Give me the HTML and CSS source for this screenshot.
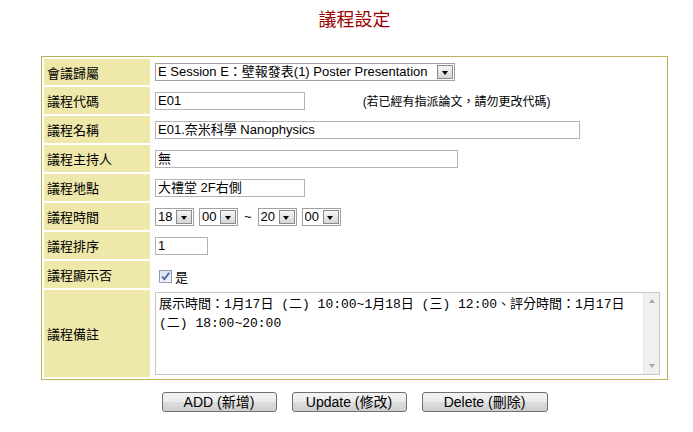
FILE: index.html
```html
<!DOCTYPE html>
<html lang="zh-Hant">

<head>
  <meta charset="UTF-8">
  <title>議程設定</title>
  <link rel="stylesheet" href="styles.css">
</head>

<body>
  <div class="page">
    <h1>議程設定</h1>

    <table class="form-table">
      <tr class="row-first">
        <th>會議歸屬</th>
        <td>
          <span class="select select-session">
            <span class="select-value">E Session E：壁報發表(1) Poster Presentation</span>
            <span class="select-arrow"></span>
          </span>
        </td>
      </tr>
      <tr>
        <th>議程代碼</th>
        <td>
          <span class="input input-code">E01</span>
          <span class="hint">(若已經有指派論文，請勿更改代碼)</span>
        </td>
      </tr>
      <tr>
        <th>議程名稱</th>
        <td><span class="input input-name">E01.奈米科學 Nanophysics</span></td>
      </tr>
      <tr>
        <th>議程主持人</th>
        <td><span class="input input-host">無</span></td>
      </tr>
      <tr>
        <th>議程地點</th>
        <td><span class="input input-place">大禮堂 2F右側</span></td>
      </tr>
      <tr>
        <th>議程時間</th>
        <td>
          <div class="time">
            <span class="select select-time"><span class="select-value">18</span><span class="select-arrow"></span></span>
            <span class="select select-time"><span class="select-value">00</span><span class="select-arrow"></span></span>
            <span class="tilde">~</span>
            <span class="select select-time"><span class="select-value">20</span><span class="select-arrow"></span></span>
            <span class="select select-time"><span class="select-value">00</span><span class="select-arrow"></span></span>
          </div>
        </td>
      </tr>
      <tr>
        <th>議程排序</th>
        <td><span class="input input-order">1</span></td>
      </tr>
      <tr>
        <th>議程顯示否</th>
        <td>
          <label class="check">
            <span class="check-box">
              <svg width="11" height="11" viewBox="0 0 11 11"><path d="M2 5.5 L4.3 8.3 L9.2 1.8" fill="none" stroke="#4a5fa8" stroke-width="1.8"/></svg>
            </span>
            <span>是</span>
          </label>
        </td>
      </tr>
      <tr class="row-note">
        <th>議程備註</th>
        <td>
          <div class="textarea">
            <div class="textarea-text">展示時間：1月17日 (二) 10:00~1月18日 (三) 12:00、評分時間：1月17日<br>(二) 18:00~20:00</div>
            <div class="scrollbar">
              <span class="scroll-up"></span>
              <span class="scroll-down"></span>
            </div>
          </div>
        </td>
      </tr>
    </table>

    <div class="buttons">
      <button class="btn btn-add">ADD (新增)</button>
      <button class="btn btn-update">Update (修改)</button>
      <button class="btn btn-delete">Delete (刪除)</button>
    </div>
  </div>
</body>

</html>
```

FILE: styles.css
```css
* {
  box-sizing: border-box;
}

body {
  margin: 0;
  background: #fff;
  color: #000;
  font-family: "Liberation Sans", "Noto Sans CJK TC", sans-serif;
  font-size: 13px;
}

.page {
  width: 627px;
  margin-left: 41px;
}

h1 {
  margin: 9px 0 25px;
  font-size: 18px;
  line-height: 22px;
  font-weight: normal;
  text-align: center;
  color: #9b0000;
}

.form-table {
  width: 627px;
  border: 1px solid #bdb25c;
  border-spacing: 2px;
}

.form-table th,
.form-table td {
  height: 27px;
  padding: 0 3px;
  vertical-align: middle;
}

.form-table th {
  width: 106px;
  background: #eee8aa;
  font-weight: normal;
  text-align: left;
}

.form-table .row-first th,
.form-table .row-first td {
  height: 26px;
}

.form-table .row-note th,
.form-table .row-note td {
  height: 87px;
}

.input,
.select {
  display: inline-flex;
  align-items: center;
  height: 18px;
  border: 1px solid #b4b4b4;
  background: #fff;
  font-size: 13px;
  line-height: 16px;
  padding-left: 2px;
  vertical-align: middle;
  white-space: nowrap;
}

.input-code,
.input-place {
  width: 150px;
}

.input-name {
  width: 425px;
}

.input-host {
  width: 303px;
}

.input-order {
  width: 53px;
}

.hint {
  margin-left: 54px;
  font-size: 12px;
  vertical-align: middle;
}

.select {
  border-color: #a0a0a0;
  padding-right: 1px;
}

.select-value {
  flex: 1;
  overflow: hidden;
}

.select-session {
  width: 300px;
}

.select-arrow {
  position: relative;
  flex: none;
  width: 16px;
  height: 14px;
  border: 1px solid #8a8a8a;
  background: linear-gradient(#f6f6f6, #d6d6d6);
}

.select-arrow::after {
  content: "";
  position: absolute;
  left: 3.5px;
  top: 5px;
  border-left: 3.5px solid transparent;
  border-right: 3.5px solid transparent;
  border-top: 4px solid #000;
}

.time {
  display: flex;
  align-items: center;
  gap: 5px;
}

.select-time {
  width: 39px;
}

.tilde {
  margin: 0 1px;
  font-size: 13px;
}

.check {
  display: inline-flex;
  align-items: center;
  gap: 3px;
  margin-left: 4px;
  margin-top: 4px;
}

.check-box {
  display: inline-flex;
  align-items: center;
  justify-content: center;
  width: 13px;
  height: 13px;
  border: 1px solid #8f9bb8;
  background: linear-gradient(#dde2ea, #f4f6f9);
}

.textarea {
  display: flex;
  width: 505px;
  height: 83px;
  border: 1px solid #c6c6c6;
  background: #fff;
}

.textarea-text {
  flex: 1;
  padding: 2px 3px;
  font-family: "Liberation Mono", "Noto Sans CJK TC", monospace;
  font-size: 13px;
  line-height: 19px;
  white-space: nowrap;
}

.scrollbar {
  display: flex;
  flex-direction: column;
  justify-content: space-between;
  width: 16px;
  background: #f0f0f0;
  border-left: 1px solid #e4e4e4;
  padding: 6px 0;
}

.scroll-up,
.scroll-down {
  align-self: center;
  border-left: 3.5px solid transparent;
  border-right: 3.5px solid transparent;
}

.scroll-up {
  border-bottom: 4px solid #a8a8a8;
}

.scroll-down {
  border-top: 4px solid #a8a8a8;
}

.buttons {
  display: flex;
  justify-content: center;
  gap: 15px;
  margin-top: 12px;
}

.btn {
  height: 20px;
  padding: 0;
  border: 1px solid #707070;
  border-radius: 3px;
  background: linear-gradient(#f2f2f2 0%, #ebebeb 50%, #dddddd 51%, #cfcfcf 100%);
  font-family: "Liberation Sans", "Noto Sans CJK TC", sans-serif;
  font-size: 14px;
  line-height: 18px;
  color: #000;
}

.btn-add {
  width: 115px;
}

.btn-update {
  width: 115px;
}

.btn-delete {
  width: 126px;
}
```
